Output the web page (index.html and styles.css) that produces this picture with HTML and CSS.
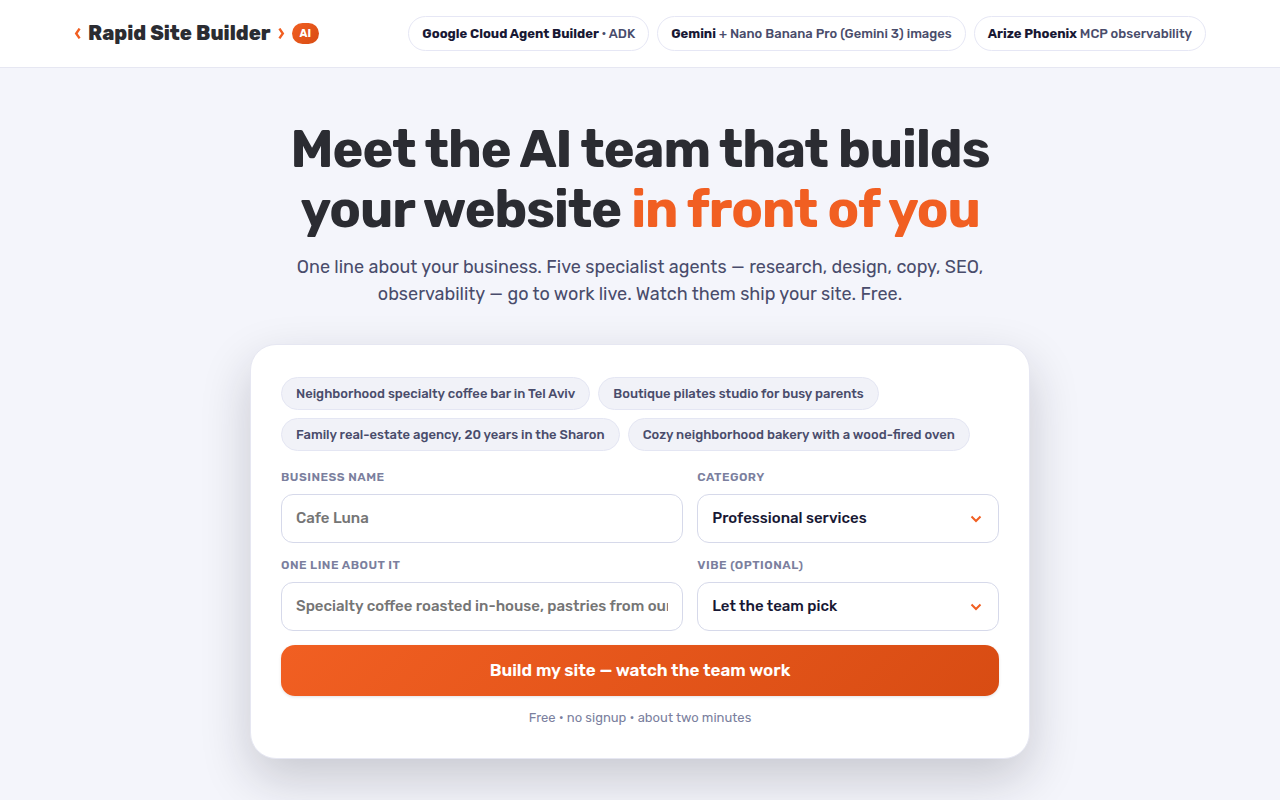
FILE: index.html
```html
<!DOCTYPE html>
<html lang="en">
<head>
<meta charset="utf-8">
<meta name="viewport" content="width=device-width, initial-scale=1">
<title>Rapid Site Builder</title>
<link rel="stylesheet" href="styles.css">
</head>
<body>
<header class="topbar">
  <div class="topbar-inner">
    <a class="brand" href="#">
      <svg class="bracket" viewBox="0 0 7 12" aria-hidden="true"><path d="M5.6.6 2.2 5.5l3.4 4.9"/></svg>
      <span class="brand-name">Rapid Site Builder</span>
      <svg class="bracket" viewBox="0 0 7 12" aria-hidden="true"><path d="M1.4.6 4.8 5.5l-3.4 4.9"/></svg>
      <span class="brand-badge">AI</span>
    </a>
    <ul class="stack">
      <li class="stack-item"><strong>Google Cloud Agent Builder</strong> · ADK</li>
      <li class="stack-item"><strong>Gemini</strong> + Nano Banana Pro (Gemini 3) images</li>
      <li class="stack-item"><strong>Arize Phoenix</strong> MCP observability</li>
    </ul>
  </div>
</header>
<main class="hero">
  <h1 class="title">Meet the AI team that builds<br>your website <span class="accent">in front of you</span></h1>
  <p class="lead">One line about your business. Five specialist agents — research, design, copy, SEO,<br>observability — go to work live. Watch them ship your site. Free.</p>
  <form class="card">
    <div class="chips">
      <button class="chip" type="button">Neighborhood specialty coffee bar in Tel Aviv</button>
      <button class="chip" type="button">Boutique pilates studio for busy parents</button>
      <button class="chip" type="button">Family real-estate agency, 20 years in the Sharon</button>
      <button class="chip" type="button">Cozy neighborhood bakery with a wood-fired oven</button>
    </div>
    <div class="fields">
      <div class="field">
        <label for="name">Business name</label>
        <input id="name" type="text" placeholder="Cafe Luna">
      </div>
      <div class="field">
        <label for="category">Category</label>
        <div class="select">
          <select id="category"><option>Professional services</option></select>
          <svg class="caret" viewBox="0 0 12 8" aria-hidden="true"><path d="m1.5 1.5 4.5 4.5 4.5-4.5"/></svg>
        </div>
      </div>
      <div class="field">
        <label for="about">One line about it</label>
        <input id="about" type="text" placeholder="Specialty coffee roasted in-house, pastries from our own oven">
      </div>
      <div class="field">
        <label for="vibe">Vibe (optional)</label>
        <div class="select">
          <select id="vibe"><option>Let the team pick</option></select>
          <svg class="caret" viewBox="0 0 12 8" aria-hidden="true"><path d="m1.5 1.5 4.5 4.5 4.5-4.5"/></svg>
        </div>
      </div>
    </div>
    <button class="submit" type="submit">Build my site — watch the team work</button>
    <p class="note">Free • no signup • about two minutes</p>
  </form>
</main>
</body>
</html>
```
FILE: styles.css
```css
* { box-sizing: border-box; }

body {
  margin: 0;
  background: #f4f5fb;
  color: #181834;
  font-family: Rubik, Inter, Roboto, "Liberation Sans", sans-serif;
}

input, select, button { font: inherit; }

.topbar {
  background: #fff;
  border-bottom: 1px solid #e6e7f2;
}

.topbar-inner {
  max-width: 1180px;
  margin: 0 auto;
  padding: 16px 24px;
  display: flex;
  align-items: center;
  justify-content: space-between;
  gap: 24px;
}

.brand {
  display: flex;
  align-items: center;
  gap: 7px;
  color: #2b2c32;
  text-decoration: none;
}

.brand-name {
  padding-bottom: 2px;
  font-size: 20px;
  line-height: 24px;
  font-weight: 800;
  white-space: nowrap;
}

.bracket {
  width: 7px;
  height: 12px;
  fill: none;
  stroke: #f15f22;
  stroke-width: 2.4;
}

.brand-badge {
  padding: 3px 8px;
  border-radius: 12px;
  background: linear-gradient(135deg, #f15f22, #d84c13);
  color: #fff;
  font-size: 11px;
  line-height: 15px;
  font-weight: 700;
}

.stack {
  display: flex;
  gap: 8px;
  margin: 0;
  padding: 0;
  list-style: none;
}

.stack-item {
  padding: 8px 13px;
  border: 1px solid #e6e7f5;
  border-radius: 18px;
  color: #494c6b;
  font-size: 13px;
  line-height: 17px;
  font-weight: 500;
  white-space: nowrap;
}

.stack-item strong { color: #181834; font-weight: 700; }

.hero {
  max-width: 828px;
  margin: 0 auto;
  padding: 51px 24px 60px;
  text-align: center;
}

.title {
  margin: 0;
  color: #2b2c32;
  font-size: 52px;
  line-height: 60px;
  font-weight: 700;
  letter-spacing: -1px;
}

.accent { color: #f15f22; }

.lead {
  margin: 15px 0 36px;
  color: #494c6b;
  font-size: 18px;
  line-height: 27px;
}

.card {
  padding: 32px 30px 31px;
  border: 1px solid #e6e7f2;
  border-radius: 26px;
  background: #fff;
  box-shadow: 0 20px 50px rgba(24, 24, 40, 0.2);
}

.chips {
  display: flex;
  flex-wrap: wrap;
  gap: 8px;
}

.chip {
  padding: 7px 14px;
  border: 1px solid #e4e6f3;
  border-radius: 17px;
  background: #f1f2f8;
  color: #494c6b;
  font-size: 13px;
  line-height: 17px;
  font-weight: 500;
}

.fields {
  display: grid;
  grid-template-columns: 4fr 3fr;
  gap: 14px;
  margin: 18px 0 14px;
  text-align: left;
}

.field {
  display: flex;
  flex-direction: column;
  gap: 9px;
  min-width: 0;
}

.field label {
  color: #7b7f9e;
  font-size: 12px;
  line-height: 16px;
  font-weight: 600;
  letter-spacing: 0.04em;
  text-transform: uppercase;
}

.field input, .field select {
  width: 100%;
  height: 49px;
  padding: 0 14px 2px;
  border: 1px solid #d6d9ea;
  border-radius: 12px;
  background: #fff;
  color: #181834;
  font-size: 15px;
  font-weight: 500;
}

.field input::placeholder { color: #757575; }

.field select { appearance: none; }

.select { position: relative; }

.caret {
  position: absolute;
  top: 21px;
  right: 17px;
  width: 12px;
  height: 8px;
  fill: none;
  stroke: #f15f22;
  stroke-width: 2;
  pointer-events: none;
}

.submit {
  width: 100%;
  padding: 15px;
  border: 0;
  border-radius: 14px;
  background: linear-gradient(135deg, #f15f22, #d84c13);
  box-shadow: 0 1px 3px rgba(24, 24, 52, 0.12);
  color: #fff;
  font-size: 17px;
  line-height: 21px;
  font-weight: 600;
}

.note {
  margin: 13px 0 0;
  color: #7b7f9e;
  font-size: 13px;
  line-height: 18px;
}
```
